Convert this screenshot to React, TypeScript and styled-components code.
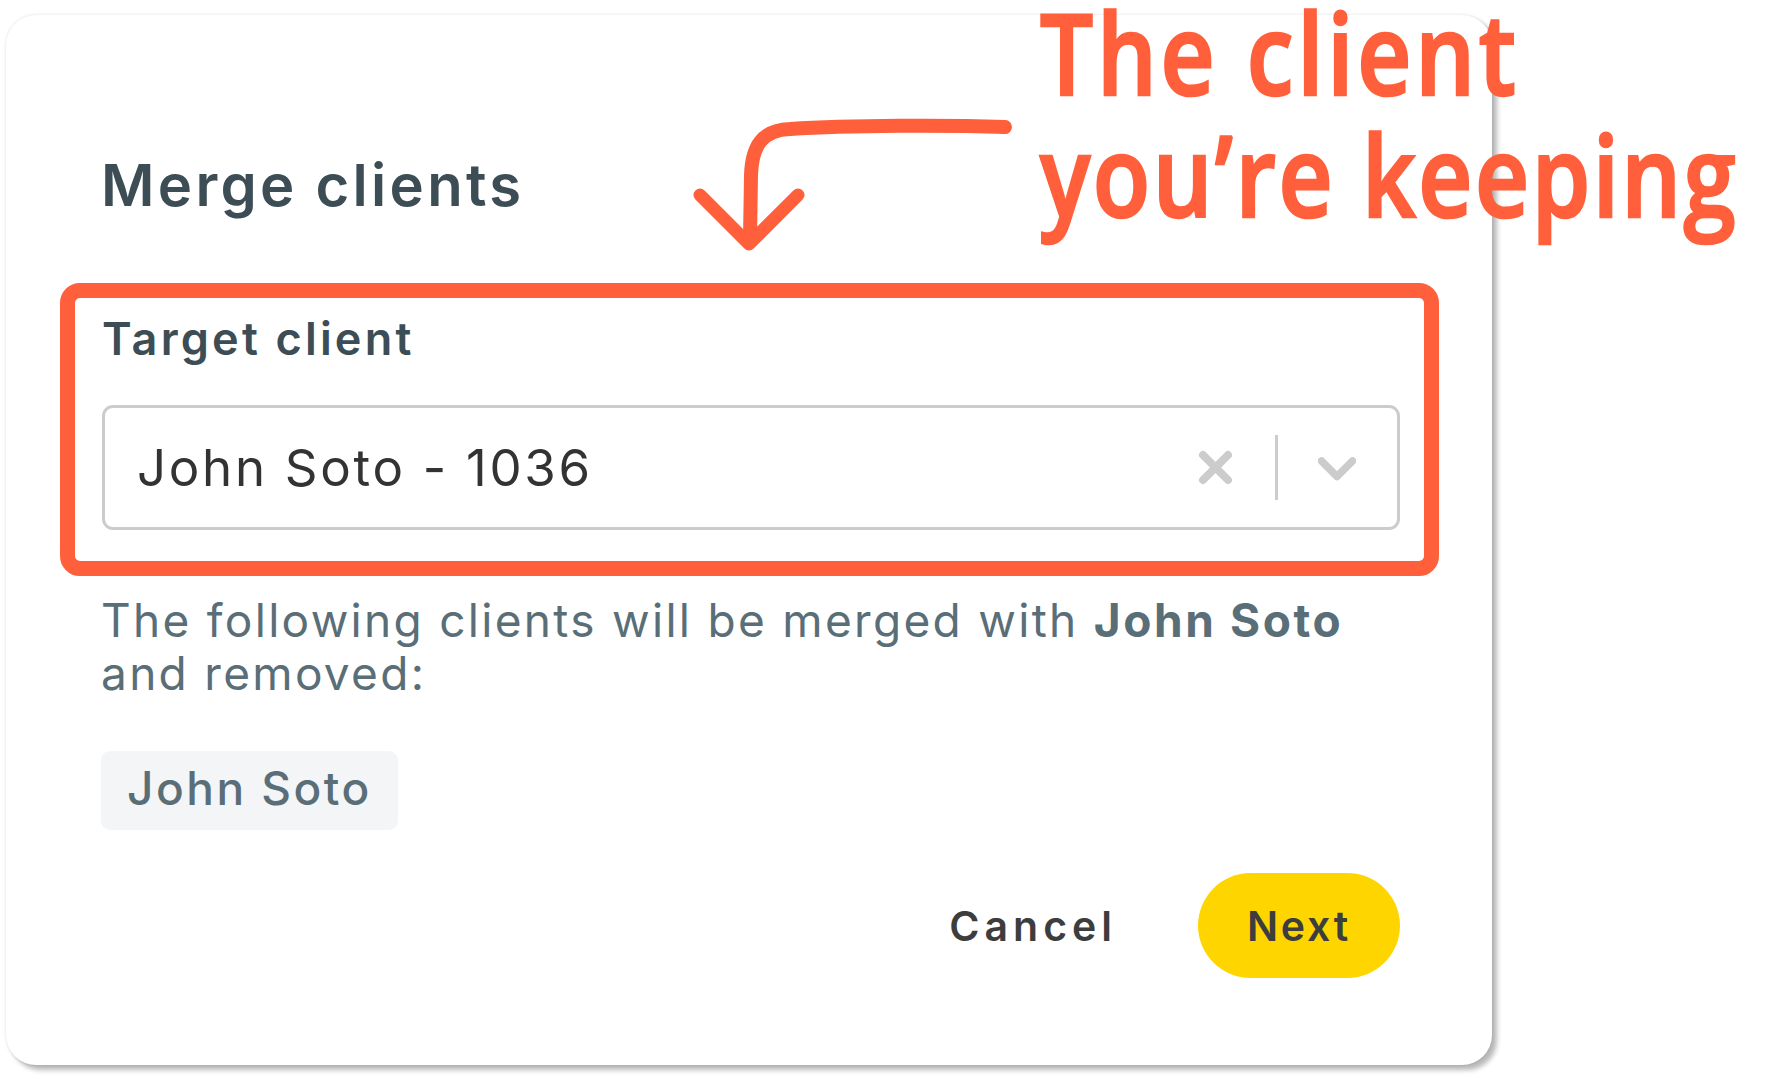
import React from "react";
import styled, { createGlobalStyle } from "styled-components";

const accent = "#ff5f3b";
const slate = "#5a6e78";
const heading = "#3c4d56";
const ink = "#3d3d3d";
const line = "#cccccc";

const GlobalStyle = createGlobalStyle`
  html, body {
    margin: 0;
    background: #ffffff;
    overflow: hidden;
  }
  body {
    font-family: Inter, "Liberation Sans", sans-serif;
  }
`;

const Page = styled.div`
  position: relative;
  width: 1773px;
  height: 1079px;
  padding: 15px 0 0 6px;
  box-sizing: border-box;
`;

const Card = styled.section`
  box-sizing: border-box;
  width: 1486px;
  height: 1050px;
  padding: 135px 92px 0 95px;
  background: #ffffff;
  border-radius: 30px;
  box-shadow: 5px 5px 5px rgba(0, 0, 0, 0.28), 0 0 3px rgba(0, 0, 0, 0.14);
`;

const Title = styled.h1`
  margin: 0 0 63px;
  font-size: 58px;
  line-height: 70px;
  font-weight: 600;
  color: ${heading};
  letter-spacing: 3.3px;
`;

const Highlight = styled.div`
  margin: 0 -39px 18px -41px;
  padding: 13px 24px 31px 27px;
  border: 15px solid ${accent};
  border-radius: 20px;
`;

const Label = styled.label`
  display: block;
  margin-bottom: 38px;
  font-size: 45px;
  line-height: 56px;
  font-weight: 600;
  color: ${heading};
  letter-spacing: 3.2px;
`;

const Select = styled.div`
  box-sizing: border-box;
  display: flex;
  align-items: center;
  height: 125px;
  padding: 0 41px 0 32px;
  border: 3px solid ${line};
  border-radius: 11px;
`;

const SelectValue = styled.span`
  flex: 1;
  font-size: 51px;
  font-weight: 400;
  color: #333333;
  letter-spacing: 2.7px;
`;

const ClearIcon = styled.svg`
  width: 35px;
  height: 35px;
  margin-right: 42px;
`;

const Divider = styled.span`
  width: 3px;
  height: 65px;
  background: ${line};
  margin-right: 40px;
`;

const ChevronIcon = styled.svg`
  width: 38px;
  height: 25px;
  margin-top: 4px;
`;

const Message = styled.p`
  margin: 0 0 51px;
  font-size: 46px;
  line-height: 53px;
  font-weight: 400;
  color: ${slate};
  letter-spacing: 2.3px;
  strong {
    font-weight: 700;
    letter-spacing: 2.6px;
  }
`;

const Chip = styled.div`
  display: inline-flex;
  align-items: center;
  box-sizing: border-box;
  height: 79px;
  padding: 0 26px 6px 26px;
  background: #f4f5f7;
  border-radius: 9px;
  font-size: 46px;
  font-weight: 500;
  color: ${slate};
  letter-spacing: 2.5px;
`;

const Actions = styled.div`
  display: flex;
  justify-content: flex-end;
  align-items: center;
  margin-top: 43px;
  gap: 81px;
`;

const Button = styled.button<{ primary?: boolean }>`
  box-sizing: border-box;
  height: 105px;
  width: ${(props) => (props.primary ? "202px" : "auto")};
  padding: 0;
  border: 0;
  border-radius: 53px;
  background: ${(props) => (props.primary ? "#ffd500" : "transparent")};
  font-family: inherit;
  font-size: 41px;
  font-weight: 600;
  color: ${ink};
  letter-spacing: ${(props) => (props.primary ? "2.8px" : "5px")};
`;

const Arrow = styled.svg`
  position: absolute;
  left: 680px;
  top: 100px;
  width: 340px;
  height: 160px;
`;

const Note = styled.div`
  position: absolute;
  left: 1040px;
  top: 0;
  display: flex;
  flex-direction: column;
  gap: 18px;
  font-family: "Open Sans", sans-serif;
  font-size: 112px;
  line-height: 104px;
  font-weight: 600;
  color: ${accent};
  -webkit-text-stroke: 2.5px ${accent};
  transform-origin: left top;
  transform: scaleX(0.84);
  white-space: nowrap;
`;

const NoteLine = styled.div<{ tight?: boolean }>`
  display: block;
  letter-spacing: ${(props) => (props.tight ? "2.9px" : "4.5px")};
`;

export default function App() {
  return (
    <Page>
      <GlobalStyle />
      <Card>
        <Title>Merge clients</Title>
        <Highlight>
          <Label>Target client</Label>
          <Select>
            <SelectValue>John Soto - 1036</SelectValue>
            <ClearIcon viewBox="0 0 35 35">
              <path
                d="M5 5 L30 30 M30 5 L5 30"
                stroke={line}
                strokeWidth="8"
                strokeLinecap="round"
                fill="none"
              />
            </ClearIcon>
            <Divider />
            <ChevronIcon viewBox="0 0 38 25">
              <path
                d="M3.5 4 L19 19.5 L34.5 4"
                stroke={line}
                strokeWidth="7.5"
                strokeLinecap="round"
                strokeLinejoin="round"
                fill="none"
              />
            </ChevronIcon>
          </Select>
        </Highlight>
        <Message>
          The following clients will be merged with <strong>John Soto</strong>{" "}
          and removed:
        </Message>
        <Chip>John Soto</Chip>
        <Actions>
          <Button>Cancel</Button>
          <Button primary>Next</Button>
        </Actions>
      </Card>
      <Arrow viewBox="680 100 340 160">
        <g fill="none" stroke={accent} strokeLinecap="round" strokeLinejoin="round">
          <path
            d="M1005 127 C 950 125 850 125 790 129 C 762 130 752 146 751 175 L 750 240"
            strokeWidth="14"
          />
          <path d="M700 195 L 749 244 L 798 195" strokeWidth="13" />
        </g>
      </Arrow>
      <Note>
        <NoteLine>The client</NoteLine>
        <NoteLine tight>you’re keeping</NoteLine>
      </Note>
    </Page>
  );
}
